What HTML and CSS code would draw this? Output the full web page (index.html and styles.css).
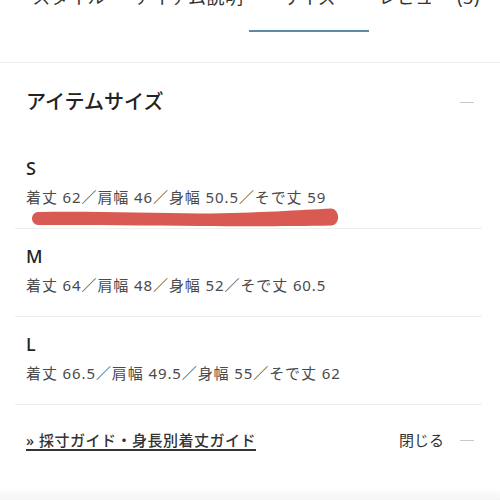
FILE: index.html
```html
<!DOCTYPE html>
<html lang="ja">
<head>
<meta charset="utf-8">
<link rel="stylesheet" href="styles.css">
</head>
<body>
<div class="page">
  <nav class="tabs">
    <div class="tab">スタイル</div>
    <div class="tab">アイテム説明</div>
    <div class="tab active">サイズ</div>
    <div class="tab">レビュー (3)</div>
  </nav>
  <section class="sizes">
    <div class="head">
      <h2 class="title">アイテムサイズ</h2>
      <span class="minus"></span>
    </div>
    <div class="row">
      <div class="size">S</div>
      <div class="spec">着丈 62／肩幅 46／身幅 50.5／そで丈 59</div>
    </div>
    <div class="row">
      <div class="size">M</div>
      <div class="spec">着丈 64／肩幅 48／身幅 52／そで丈 60.5</div>
    </div>
    <div class="row">
      <div class="size">L</div>
      <div class="spec">着丈 66.5／肩幅 49.5／身幅 55／そで丈 62</div>
    </div>
    <div class="foot">
      <a class="guide">» 採寸ガイド・身長別着丈ガイド</a>
      <div class="close"><span>閉じる</span><span class="minus"></span></div>
    </div>
  </section>
  <div class="band"></div>
  <svg class="marker" width="500" height="500" viewBox="0 0 500 500">
    <path d="M38 212 C90 211 150 213 200 213.5 C260 213 300 210 331 208.5 C340 209 341 225 331 225.5 C300 226 260 226.5 200 226 C150 225.5 90 225 38 225 C30 224 30 213 38 212 Z" fill="#d85a52"/>
  </svg>
</div>
</body>
</html>
```
FILE: styles.css
```css
html, body {
  margin: 0;
  padding: 0;
  background: #fff;
}
body {
  font-family: "Noto Sans", "Noto Sans CJK JP", sans-serif;
  color: #222;
  width: 500px;
  height: 500px;
  overflow: hidden;
}
.page {
  position: relative;
  display: flow-root;
  width: 500px;
  height: 500px;
}
.tabs {
  display: grid;
  grid-template-columns: repeat(4, 120px);
  padding-left: 9px;
  margin-top: -12px;
  padding-bottom: 30px;
  border-bottom: 1px solid #f0f0f0;
}
.tab {
  font-size: 18px;
  line-height: 18px;
  color: #333;
  text-align: center;
  padding-bottom: 24px;
  border-bottom: 2px solid transparent;
  white-space: nowrap;
  letter-spacing: 0.4px;
}
.tab.active {
  border-bottom-color: #5d8aa5;
}
.sizes {
  margin: 0 18px 0 15px;
  padding-top: 25px;
}
.head {
  display: flex;
  align-items: center;
  justify-content: space-between;
  padding: 0 8px 25px 11px;
}
.title {
  margin: 0;
  font-size: 20px;
  line-height: 28px;
  font-weight: 500;
  color: #222;
}
.minus {
  display: inline-block;
  width: 14px;
  height: 1px;
  background: #c8c8c8;
}
.row {
  padding: 17px 8px 21px 11px;
  border-bottom: 1px solid #eeeeee;
}
.size {
  font-size: 18px;
  line-height: 20px;
  font-weight: 500;
  color: #222;
}
.spec {
  margin-top: 9px;
  font-size: 15px;
  line-height: 20px;
  color: #4a4a4a;
  white-space: nowrap;
  letter-spacing: 0.9px;
}
.foot {
  display: flex;
  align-items: center;
  justify-content: space-between;
  padding: 24px 8px 0 11px;
}
.guide {
  font-size: 15px;
  line-height: 22px;
  font-weight: 500;
  color: #333;
  letter-spacing: 0.5px;
  text-decoration: underline;
  text-decoration-thickness: 2px;
  text-underline-offset: 3px;
}
.close {
  display: flex;
  align-items: center;
  gap: 16px;
  font-size: 15px;
  line-height: 22px;
  color: #333;
}
.band {
  position: absolute;
  left: 0;
  right: 0;
  top: 490px;
  height: 10px;
  background: linear-gradient(#fcfcfc, #f5f5f5);
}
.marker {
  position: absolute;
  left: 0;
  top: 0;
  pointer-events: none;
}
```
